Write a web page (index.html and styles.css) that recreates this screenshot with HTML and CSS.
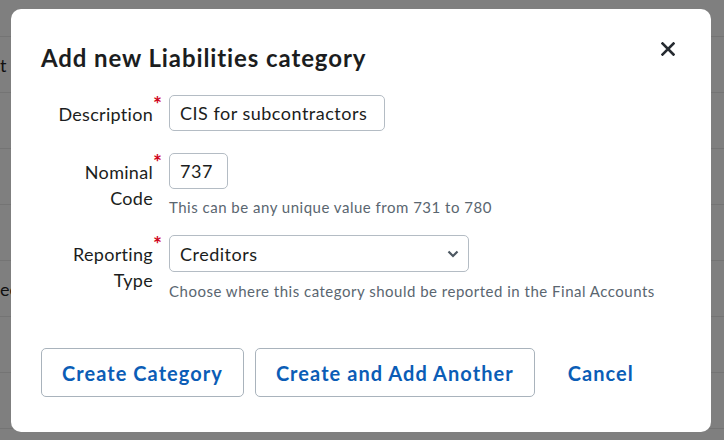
FILE: index.html
```html
<!DOCTYPE html>
<html lang="en">
<head>
<meta charset="utf-8">
<title>Add new Liabilities category</title>
<link rel="stylesheet" href="styles.css">
</head>
<body>
  <div class="page">
    <div class="page-row first"></div>
    <div class="page-row"><span class="row-text">t r</span></div>
    <div class="page-row"></div>
    <div class="page-row"></div>
    <div class="page-row"></div>
    <div class="page-row"><span class="row-text">ee</span></div>
    <div class="page-row"></div>
    <div class="page-row"></div>
  </div>
  <div class="overlay"></div>
  <div class="modal" role="dialog">
    <button class="close" aria-label="Close">
      <svg width="14" height="14" viewBox="0 0 14 14"><path d="M1.5 1.5 L12.5 12.5 M12.5 1.5 L1.5 12.5" stroke="#262b31" stroke-width="2.6" stroke-linecap="square"/></svg>
    </button>
    <h2 class="title">Add new Liabilities category</h2>
    <form class="form">
      <div class="field field-desc">
        <label class="label">Description<span class="req">*</span></label>
        <div class="control">
          <input class="input input-desc" type="text" value="CIS for subcontractors">
        </div>
      </div>
      <div class="field field-code">
        <label class="label">Nominal<span class="req">*</span><br>Code</label>
        <div class="control">
          <input class="input input-code" type="text" value="737">
          <div class="help">This can be any unique value from 731 to 780</div>
        </div>
      </div>
      <div class="field field-type">
        <label class="label">Reporting<span class="req">*</span><br>Type</label>
        <div class="control">
          <div class="select">
            <span>Creditors</span>
            <svg width="12" height="8" viewBox="0 0 12 8"><path d="M1.5 1.5 L6 6 L10.5 1.5" fill="none" stroke="#4d5862" stroke-width="2.2"/></svg>
          </div>
          <div class="help">Choose where this category should be reported in the Final Accounts</div>
        </div>
      </div>
      <div class="actions">
        <button type="button" class="btn">Create Category</button>
        <button type="button" class="btn">Create and Add Another</button>
        <button type="button" class="btn btn-link">Cancel</button>
      </div>
    </form>
  </div>
</body>
</html>
```
FILE: styles.css
```css
* { box-sizing: border-box; }
html, body { margin: 0; padding: 0; }
body {
  width: 724px;
  height: 440px;
  overflow: hidden;
  background: #ffffff;
  font-family: "Lato", "Noto Sans", sans-serif;
  color: #1b1d20;
}
.page { display: flex; flex-direction: column; }
.page-row {
  height: 56px;
  border-bottom: 1px solid #e8e8e8;
  display: flex;
  align-items: center;
  font-size: 18px;
  color: #222;
}
.page-row.first { height: 37px; }
.row-text { display: block; }
.overlay {
  position: fixed;
  inset: 0;
  background: rgba(0, 0, 0, 0.5);
}
.modal {
  position: fixed;
  left: 11px;
  top: 9px;
  width: 700px;
  background: #fff;
  border-radius: 10px;
  padding: 34px 30px 35px 30px;
}
.close {
  position: absolute;
  top: 33px;
  right: 36px;
  width: 14px;
  height: 14px;
  padding: 0;
  border: 0;
  background: none;
  display: flex;
}
.title {
  margin: 0 0 22px 0;
  font-size: 24px;
  line-height: 30px;
  font-weight: 700;
  letter-spacing: 0.9px;
  color: #1b1d20;
}
.form { display: flex; flex-direction: column; }
.field {
  display: grid;
  grid-template-columns: 120px 1fr;
  column-gap: 8px;
  align-items: start;
}
.field-desc { margin-bottom: 22px; }
.field-code { margin-bottom: 18px; }
.label {
  padding-top: 6px;
  text-align: right;
  font-size: 18px;
  line-height: 26px;
  letter-spacing: 0.3px;
  color: #1b1d20;
  padding-right: 8px;
  position: relative;
}
.req {
  position: absolute;
  right: -1px;
  top: -1px;
  color: #d0021b;
  font-size: 21px;
  line-height: 20px;
  font-weight: 700;
  letter-spacing: 0;
}
.control { display: flex; flex-direction: column; align-items: flex-start; }
.input, .select {
  height: 36px;
  border: 1px solid #b4bcc4;
  border-radius: 5px;
  padding: 0 10px;
  font-family: inherit;
  font-size: 18px;
  letter-spacing: 0.5px;
  color: #1b1d20;
  background: #fff;
}
.input-desc { width: 216px; }
.input-code { width: 59px; }
.select {
  width: 300px;
  height: 37px;
  display: flex;
  align-items: center;
  justify-content: space-between;
  padding-right: 9px;
}
.help {
  font-size: 15px;
  line-height: 20px;
  letter-spacing: 0.5px;
  color: #5a6670;
  margin-top: 8px;
  white-space: nowrap;
}
.field-type .help { margin-top: 9px; }
.actions {
  display: flex;
  gap: 11px;
  margin-top: 47px;
}
.btn {
  height: 49px;
  padding: 0 20px;
  border: 1px solid #a9b3bc;
  border-radius: 5px;
  background: #fff;
  font-family: inherit;
  font-size: 20px;
  font-weight: 700;
  letter-spacing: 1.05px;
  color: #0b5db6;
}
.btn-link { border-color: transparent; margin-left: 1px; }
```
